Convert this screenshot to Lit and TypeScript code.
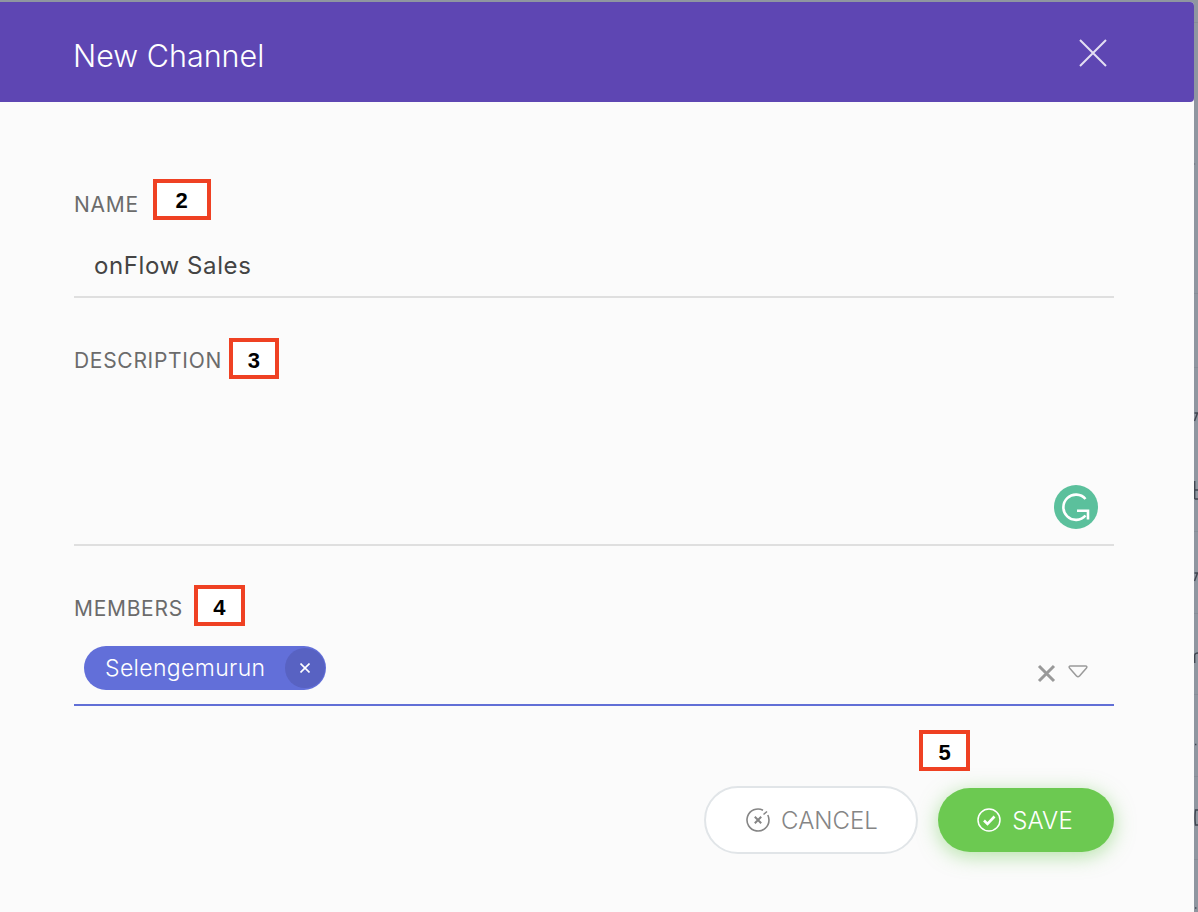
import { LitElement, html, css } from "lit";
import { customElement } from "lit/decorators.js";

@customElement("app-root")
export class AppRoot extends LitElement {
  static styles = css`
    :host {
      display: block;
      position: relative;
      width: 1198px;
      height: 912px;
      overflow: hidden;
      background: #8f96a0;
      font-family: Inter, "Liberation Sans", sans-serif;
    }
    .backdrop {
      position: absolute;
      left: 1194px;
      top: 0;
      display: block;
    }
    .dialog {
      width: 1194px;
      height: 910px;
      margin-top: 2px;
      background: #fbfbfb;
      border-top-right-radius: 4px;
      display: flex;
      flex-direction: column;
    }
    .head {
      height: 100px;
      flex: none;
      background: #5e46b3;
      border-radius: 0 4px 4px 0;
      display: flex;
      align-items: center;
      justify-content: space-between;
      padding: 6px 87px 0 73px;
      box-sizing: border-box;
      color: #fff;
      font-size: 30.5px;
      font-weight: 300;
    }
    .head svg { display: block; margin-top: -4px; }
    .body {
      padding: 0 80px 0 74px;
      display: flex;
      flex-direction: column;
    }
    .label-row {
      display: flex;
      align-items: flex-start;
      font-size: 21px;
      letter-spacing: 0.7px;
      color: #6b6b6b;
      line-height: 24px;
    }
    .tag {
      box-sizing: border-box;
      border: 4px solid #ef4123;
      background: #fff;
      color: #000;
      font-family: "Liberation Sans", sans-serif;
      font-weight: 700;
      font-size: 22px;
      letter-spacing: 0;
      display: flex;
      align-items: center;
      justify-content: center;
    }
    .name-row { margin-top: 77px; }
    .name-row .label-text { margin-top: 14px; }
    .name-row .tag { width: 58px; height: 41px; margin-left: 14px; padding-top: 2px; }
    .value {
      font-size: 24px;
      color: #444;
      padding-left: 20px;
      height: 52px;
      margin-top: 24px;
      line-height: 44px;
      border-bottom: 2px solid #dfdfdf;
      letter-spacing: 0.6px;
    }
    .desc-row { margin-top: 40px; }
    .desc-row .label-text { margin-top: 11px; }
    .desc-row .tag { width: 50px; height: 41px; margin-left: 7px; padding-top: 4px; }
    .area {
      height: 167px;
      border-bottom: 2px solid #dfdfdf;
      display: flex;
      justify-content: flex-end;
      padding: 106px 16px 0 0;
      box-sizing: border-box;
    }
    .area svg { display: block; }
    .mem-row { margin-top: 39px; }
    .mem-row .label-text { margin-top: 12px; }
    .mem-row .tag { width: 51px; height: 41px; margin-left: 11px; padding-top: 4px; }
    .select {
      height: 80px;
      box-sizing: border-box;
      border-bottom: 2px solid #616fd6;
      display: flex;
      align-items: flex-start;
      padding: 20px 26px 0 10px;
    }
    .chip {
      display: flex;
      align-items: center;
      height: 44px;
      box-sizing: border-box;
      border-radius: 22px;
      background: #626fd9;
      color: #fff;
      font-size: 23px;
      letter-spacing: 0.35px;
      padding: 0 1px 0 21px;
      font-weight: 300;
    }
    .chip-x {
      width: 40px;
      height: 40px;
      margin-left: 20px;
      border-radius: 50%;
      background: #5862c2;
      display: flex;
      align-items: center;
      justify-content: center;
    }
    .spacer { flex: 1; }
    .sel-x { margin-top: 18px; }
    .sel-arrow { margin: 19px 0 0 12px; }
    .foot-tag-row {
      display: flex;
      justify-content: flex-end;
      margin-top: 24px;
      padding-right: 144px;
    }
    .foot-tag-row .tag { width: 51px; height: 41px; padding-top: 4px; }
    .actions {
      display: flex;
      justify-content: flex-end;
      gap: 20px;
      align-items: center;
      margin-top: 15px;
    }
    .btn {
      box-sizing: border-box;
      border-radius: 34px;
      display: flex;
      align-items: center;
      justify-content: center;
      gap: 11px;
      font-size: 24px;
      font-weight: 300;
    }
    .cancel {
      width: 214px;
      height: 68px;
      border: 2px solid #e1e5e8;
      background: #fff;
      color: #858585;
      padding-left: 2px;
    }
    .save {
      width: 176px;
      height: 64px;
      background: #6cc951;
      color: #fff;
      letter-spacing: 0.1px;
      padding-right: 2px;
      box-shadow: 0 4px 20px rgba(108, 201, 81, 0.5);
    }
  `;

  render() {
    return html`
      <svg class="backdrop" width="4" height="912" viewBox="0 0 4 912" fill="none">
        <g stroke="#868d97" stroke-width="1">
          <path d="M0 22.5 H4 M0 293.5 H4 M0 367.5 H4 M0 531.5 H4 M0 613.5 H4 M0 694.5 H4 M0 776.5 H4 M0 859.5 H4" />
        </g>
        <g stroke="#3f4650" stroke-width="1.4">
          <path d="M0.7 481 V499 M0.7 490 H4 M0.7 499 H4" />
          <path d="M0.5 421 L3.5 413 M0.5 413 H4" />
          <path d="M0.5 581 L3.5 573 M0.5 573 H4" />
          <path d="M0.7 663 V655 Q1 653 4 653" />
          <path d="M1 744.5 H2.4 M1 908 H2.4" />
          <path d="M4 810 H1.5 Q0.5 818 1.5 825 H4" />
        </g>
        <path d="M0 164 H1.2" stroke="#666d77" />
      </svg>
      <div class="dialog">
        <div class="head">
          <span>New Channel</span>
          <svg width="28" height="28" viewBox="0 0 28 28" fill="none" stroke="#e4dff3" stroke-width="2">
            <path d="M1 1 L27 27 M27 1 L1 27" />
          </svg>
        </div>
        <div class="body">
          <div class="label-row name-row">
            <span class="label-text">NAME</span><span class="tag">2</span>
          </div>
          <div class="value">onFlow Sales</div>
          <div class="label-row desc-row">
            <span class="label-text">DESCRIPTION</span><span class="tag">3</span>
          </div>
          <div class="area">
            <svg width="44" height="44" viewBox="0 0 44 44" fill="none" stroke="#fff" stroke-width="2.6">
              <circle cx="22" cy="22" r="22" fill="#5bc09c" stroke="none" />
              <path d="M31.5 14 A12.6 12.6 0 1 0 31.5 30.5" />
              <path d="M23 25.7 H34 V34.5" />
            </svg>
          </div>
          <div class="label-row mem-row">
            <span class="label-text">MEMBERS</span><span class="tag">4</span>
          </div>
          <div class="select">
            <div class="chip">
              <span>Selengemurun</span>
              <span class="chip-x">
                <svg width="10" height="10" viewBox="0 0 10 10" fill="none" stroke="#fff" stroke-width="1.6"><path d="M0.5 0.5 L9.5 9.5 M9.5 0.5 L0.5 9.5" /></svg>
              </span>
            </div>
            <span class="spacer"></span>
            <svg class="sel-x" width="19" height="19" viewBox="0 0 19 19" fill="none" stroke="#999" stroke-width="3"><path d="M2 2 L17 17 M17 2 L2 17" /></svg>
            <svg class="sel-arrow" width="20" height="13" viewBox="0 0 20 13" fill="none" stroke="#9a9a9a" stroke-width="1.5" stroke-linejoin="round"><path d="M2.5 1 H17.5 Q19.5 1 18.5 3 L11.5 11 Q10 12.3 8.5 11 L1.5 3 Q0.5 1 2.5 1 Z" /></svg>
          </div>
          <div class="foot-tag-row"><span class="tag">5</span></div>
          <div class="actions">
            <div class="btn cancel">
              <svg width="24" height="24" viewBox="0 0 24 24" fill="none" stroke="#858585" stroke-width="1.6">
                <path d="M17 2.2 A11 11 0 1 0 23 12 A11 11 0 0 0 21.8 7" />
                <path d="M17.5 6.5 L21 3.5" />
                <path d="M8.8 8.8 L15.2 15.2 M15.2 8.8 L8.8 15.2" stroke-width="2" />
              </svg>
              <span>CANCEL</span>
            </div>
            <div class="btn save">
              <svg width="24" height="24" viewBox="0 0 24 24" fill="none" stroke="#fff" stroke-width="1.5">
                <circle cx="12" cy="12" r="11" />
                <path d="M7 12.5 L10.5 16 L17.5 8.5" stroke-width="2.6" />
              </svg>
              <span>SAVE</span>
            </div>
          </div>
        </div>
      </div>
    `;
  }
}
